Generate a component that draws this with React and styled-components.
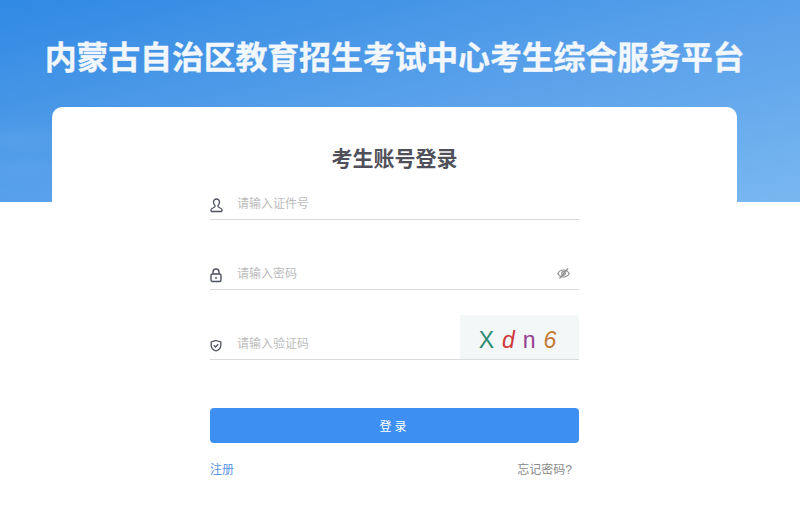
import React from 'react';
import styled, { createGlobalStyle } from 'styled-components';

const GlobalStyle = createGlobalStyle`
    html, body {
        margin: 0;
        padding: 0;
        background: #fff;
        font-family: "Liberation Sans", "Noto Sans CJK SC", sans-serif;
    }
    * { box-sizing: border-box; }
`

const Page = styled.div`
    width: 800px;
    height: 517px;
    overflow: hidden;
    padding: 0 11px 0 0;
    background:
        radial-gradient(ellipse 70px 22px at 10px 138px, rgba(255,255,255,.05), transparent) 0 0 / 100% 202px no-repeat,
        radial-gradient(ellipse 60px 16px at 20px 170px, rgba(255,255,255,.04), transparent) 0 0 / 100% 202px no-repeat,
        linear-gradient(166deg, #3089e3 0%, #58a0ea 50%, #79b7f0 100%) 0 0 / 100% 202px no-repeat;
`

const Title = styled.h1`
    margin: 0;
    height: 107px;
    padding-top: 38px;
    font-size: 32px;
    line-height: 40px;
    font-weight: 700;
    letter-spacing: -.2px;
    text-align: center;
    color: #f2f7fd;
    -webkit-text-stroke: .3px #f2f7fd;
    white-space: nowrap;
`

const Card = styled.div`
    width: 685px;
    height: 410px;
    margin-left: 52px;
    padding-top: 38px;
    background: #fff;
    border-radius: 10px 10px 0 0;
`

const CardTitle = styled.h2`
    margin: 0;
    font-size: 21px;
    line-height: 28px;
    font-weight: 700;
    text-align: center;
    color: #50505a;
`

const Form = styled.form`
    width: 369px;
    margin: 3px 0 0 158px;
`

const Field = styled.label`
    display: flex;
    align-items: flex-end;
    height: 44px;
    margin-bottom: ${p => p.$gap}px;
    border-bottom: 1px solid #d9dcdf;
`

const IconSlot = styled.span`
    display: flex;
    width: 27px;
    height: 15px;
    margin-bottom: 6px;
    color: #4e5260;
`

const Input = styled.input`
    flex: 1;
    min-width: 0;
    height: 30px;
    padding: 0;
    border: 0;
    outline: 0;
    background: transparent;
    font: 12px/30px "Liberation Sans", "Noto Sans CJK SC", sans-serif;
    &::placeholder { color: #bcbcbc; opacity: 1; }
`

const EyeButton = styled.span`
    display: flex;
    width: 22px;
    height: 15px;
    margin-bottom: 7px;
    color: #8b8b8b;
`

const Captcha = styled.div`
    display: flex;
    align-items: center;
    justify-content: center;
    gap: 8px;
    width: 119px;
    height: 44px;
    padding: 6px 4px 0 0;
    background: #f3f7f8;
`

const CaptchaChar = styled.span`
    font-family: "Liberation Sans", sans-serif;
    font-size: 23px;
    line-height: 26px;
    font-style: ${p => p.$italic ? 'italic' : 'normal'};
    color: ${p => p.$color};
`

const Submit = styled.button`
    display: block;
    width: 100%;
    height: 35px;
    margin-top: 48px;
    border: 0;
    border-radius: 4px;
    background: #3d8ff2;
    color: #fff;
    font: 12px "Liberation Sans", "Noto Sans CJK SC", sans-serif;
    letter-spacing: 3px;
`

const Links = styled.div`
    display: flex;
    justify-content: space-between;
    padding: 19px 7px 0 0;
    font-size: 12px;
    line-height: 17px;
`

const TextLink = styled.a`
    color: ${p => p.$muted ? '#8a8a8a' : '#5b94e4'};
`

const UserIcon = () => (
    <svg width="13" height="15" viewBox="0 0 13 15" fill="none" stroke="currentColor" strokeWidth="1.3">
        <path d="M6.5 1a3 3 0 0 1 3 3.2c0 1.300-.7 2.600-1.500 3.300v1.100c0 .6 3.900 1.600 4 3.200.1.800 0 1.700-.6 1.700H1.600c-.6 0-.7-.9-.6-1.700.1-1.600 4-2.600 4-3.200V7.500C4.200 6.800 3.500 5.500 3.500 4.200A3 3 0 0 1 6.500 1z" />
    </svg>
)

const LockIcon = () => (
    <svg width="12" height="15" viewBox="0 0 12 15" fill="none" stroke="currentColor" strokeWidth="1.4">
        <rect x="1" y="6" width="10" height="7.500" rx="1.500" />
        <path d="M3 6V4a3 3 0 0 1 6 0v2" />
        <path d="M6 9v2" />
    </svg>
)

const ShieldIcon = () => (
    <svg width="12" height="15" viewBox="0 0 12 15" fill="none" stroke="currentColor" strokeWidth="1.300">
        <path d="M6 2.500l4.800 1.500v3.500c0 2.800-2.400 4.500-4.800 5.500-2.400-1-4.800-2.700-4.800-5.500V4z" />
        <path d="M3.800 7.300L5.500 9l2.800-2.700" />
    </svg>
)

const EyeOffIcon = () => (
    <svg width="13" height="13" viewBox="0 0 13 13" fill="none" stroke="currentColor" strokeWidth="1.200">
        <path d="M.8 6.500C2 4.300 4 3 6.500 3s4.500 1.300 5.700 3.500C11 8.700 9 10 6.500 10S2 8.700.8 6.500z" />
        <circle cx="6.500" cy="6.500" r="1.800" />
        <path d="M2.500 11.500l8.500-10" />
    </svg>
)

const App = () => (
    <Page>
        <GlobalStyle />
        <Title>内蒙古自治区教育招生考试中心考生综合服务平台</Title>
        <Card>
            <CardTitle>考生账号登录</CardTitle>
            <Form>
                <Field $gap={26}>
                    <IconSlot><UserIcon /></IconSlot>
                    <Input placeholder="请输入证件号" />
                </Field>
                <Field $gap={26}>
                    <IconSlot><LockIcon /></IconSlot>
                    <Input placeholder="请输入密码" />
                    <EyeButton><EyeOffIcon /></EyeButton>
                </Field>
                <Field $gap={0}>
                    <IconSlot><ShieldIcon /></IconSlot>
                    <Input placeholder="请输入验证码" />
                    <Captcha>
                        <CaptchaChar $color="#2d8a73">X</CaptchaChar>
                        <CaptchaChar $color="#cf3b3b" $italic>d</CaptchaChar>
                        <CaptchaChar $color="#94408f">n</CaptchaChar>
                        <CaptchaChar $color="#c47a35" $italic>6</CaptchaChar>
                    </Captcha>
                </Field>
                <Submit type="button">登录</Submit>
                <Links>
                    <TextLink>注册</TextLink>
                    <TextLink $muted>忘记密码?</TextLink>
                </Links>
            </Form>
        </Card>
    </Page>
)

export default App;
